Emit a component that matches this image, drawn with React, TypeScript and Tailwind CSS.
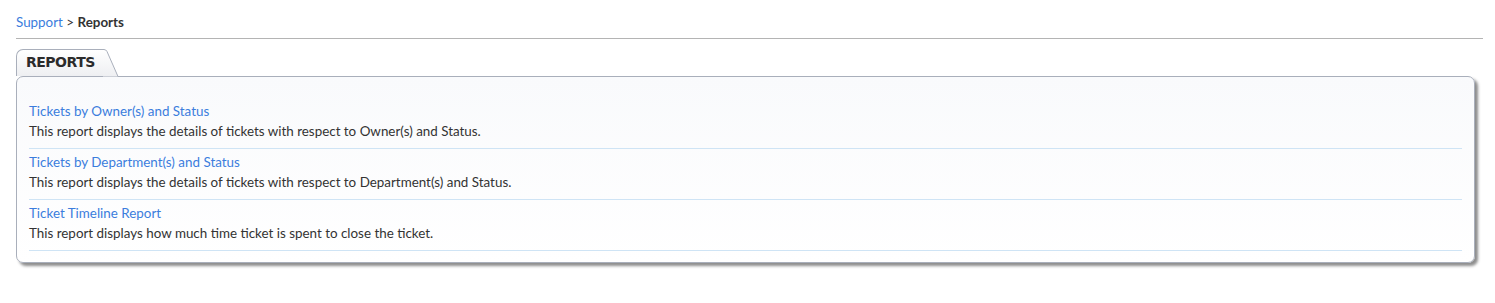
import React from 'react';

const reports = [
  {
    title: 'Tickets by Owner(s) and Status',
    desc: 'This report displays the details of tickets with respect to Owner(s) and Status.',
  },
  {
    title: 'Tickets by Department(s) and Status',
    desc: 'This report displays the details of tickets with respect to Department(s) and Status.',
  },
  {
    title: 'Ticket Timeline Report',
    desc: 'This report displays how much time ticket is spent to close the ticket.',
  },
];

export default function App() {
  return (
    <div className="min-h-[303px] bg-white pl-4 pr-3 pt-[14px] font-['Lato',sans-serif] text-[13.4px] text-[#333]">
      <div className="border-b border-[#b4b4b4] pb-[8px] leading-4">
        <a className="text-[#3b7ddd]">Support</a> &gt; <span className="font-bold">Reports</span>
      </div>

      <div className="mr-2 mt-[10px]">
        {/* tab */}
        <div className="relative h-[27px] w-[88px]">
          <div className="absolute inset-0 rounded-tl-[7px] border-l border-t border-[#a9afbb] bg-gradient-to-b from-white to-[#eeeff2]" />
          <svg className="absolute -right-[15px] top-0" width="16" height="28" viewBox="0 0 16 28">
            <defs>
              <linearGradient id="tg" x1="0" y1="0" x2="0" y2="1">
                <stop offset="0" stopColor="#ffffff" />
                <stop offset="1" stopColor="#eeeff2" />
              </linearGradient>
            </defs>
            <path d="M0 0.5 L1 0.5 Q3 0.5 4 2.5 L15 27.5 L0 27.5 Z" fill="url(#tg)" />
            <path d="M0 0.5 L1 0.5 Q3 0.5 4 2.5 L15 27.5" fill="none" stroke="#a9afbb" />
          </svg>
          <span className="relative block whitespace-nowrap pl-[10px] pt-[5px] font-['DejaVu_Sans',sans-serif] text-[14px] font-bold leading-4 tracking-[-0.5px] text-[#2b2b2b]">
            REPORTS
          </span>
        </div>

        {/* box */}
        <div className="rounded-[7px] border border-[#a9afbb] bg-gradient-to-b from-[#f9fafc] to-white px-3 pb-[11px] pt-[24px] shadow-[3px_3px_3px_rgba(0,0,0,0.45)]">
          {reports.map((r) => (
            <div key={r.title} className="border-b border-[#cfe4f5] pb-[7px] [&+div]:pt-[3px]">
              <a className="block leading-5 text-[#3b7ddd]">{r.title}</a>
              <p className="leading-5">{r.desc}</p>
            </div>
          ))}
        </div>
      </div>
    </div>
  );
}
